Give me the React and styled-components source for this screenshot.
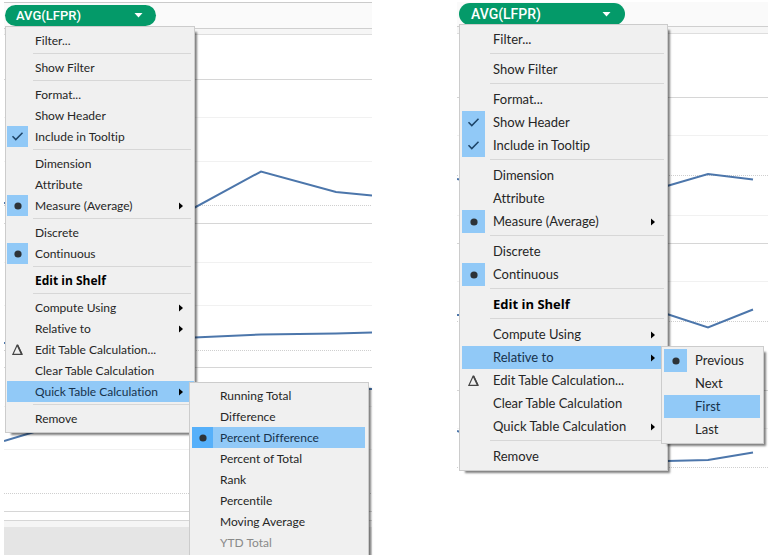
import React from "react";
import styled, { createGlobalStyle, ThemeProvider } from "styled-components";

const GlobalStyle = createGlobalStyle`
  *, *::before, *::after { box-sizing: border-box; }
  body { margin: 0; background: #fff; }
`;

const compact = {
  row: 21, rule: 6, mark: 21, font: 12, label: 7, pillWidth: 151, pillHeight: 21, pillFont: 13,
  pillTop: 2, pillLeft: 1, pillPad: 11, caret: 13, menuWidth: 190, menuTop: 0, menuPad: 1, menuEnd: 3, shelfTop: 2, shelfHeight: 27,
  stripHeight: 6, ruleStart: 26, arrowEnd: 8, subWidth: 180, subStart: 182, subTop: 1,
};

const roomy = {
  row: 23, rule: 7, mark: 23, font: 13, label: 8, pillWidth: 166, pillHeight: 22, pillFont: 14,
  pillTop: 0, pillLeft: 2, pillPad: 12, caret: 14, menuWidth: 209, menuTop: -1, menuPad: 2, menuEnd: 2, shelfTop: 2, shelfHeight: 25,
  stripHeight: 7, ruleStart: 28, arrowEnd: 9, subWidth: 103, subStart: 199, subTop: 0,
};

const Page = styled.main`
  display: grid;
  grid-template-columns: 368fr 311fr;
  column-gap: 85px;
  min-height: 100vh;
  max-height: 100vh;
  padding: 0 13px 0 4px;
  overflow: hidden;
  font-family: Lato, "Open Sans", sans-serif;
  font-variant-ligatures: none;
  color: #222;
`;

const View = styled.section`
  display: flex;
  flex-direction: column;
  min-width: 0;
`;

const Shelf = styled.header`
  flex: none;
  margin-top: ${({ theme }) => theme.shelfTop}px;
  height: ${({ theme }) => theme.shelfHeight}px;
  padding-left: ${({ theme }) => theme.pillLeft}px;
  background: #fafafa;
  border-top: 1px solid ${({ $edge }) => ($edge ? "#cbcbcb" : "#fafafa")};
  border-bottom: 1px solid #cfcfcf;
`;

const Strip = styled.div`
  flex: none;
  height: ${({ theme }) => theme.stripHeight}px;
  background: #f6f6f6;
  border-bottom: 1px solid #dedede;
`;

const PillHolder = styled.div`
  position: relative;
  z-index: 1;
  width: ${({ theme }) => theme.pillWidth}px;
  margin-top: ${({ theme }) => theme.pillTop}px;
`;

const Pill = styled.button`
  display: flex;
  align-items: center;
  justify-content: space-between;
  width: 100%;
  height: ${({ theme }) => theme.pillHeight}px;
  padding: 0 ${({ theme }) => theme.caret}px 0 ${({ theme }) => theme.pillPad}px;
  border: 0;
  border-radius: 11px;
  background: #049a69;
  color: #fff;
  font: 500 ${({ theme }) => theme.pillFont}px/20px Roboto, "Open Sans", sans-serif;
`;

const MenuPanel = styled.ul`
  position: absolute;
  top: calc(100% + ${({ theme }) => theme.menuTop}px);
  left: 0;
  width: ${({ theme }) => theme.menuWidth}px;
  margin: 0;
  padding: 3px 0 ${({ theme }) => theme.menuEnd}px ${({ theme }) => theme.menuPad}px;
  list-style: none;
  background: #f0f0f0;
  border: 1px solid #cccccc;
  box-shadow: 4px 4px 2px -2px rgba(0, 0, 0, 0.5);
`;

const SubPanel = styled(MenuPanel)`
  top: ${({ theme }) => theme.subTop}px;
  left: ${({ theme }) => theme.subStart}px;
  width: ${({ theme }) => theme.subWidth}px;
  padding: 2px 3px 2px 2px;
`;

const Entry = styled.li`
  position: relative;
`;

const Item = styled.button`
  display: flex;
  align-items: center;
  width: 100%;
  height: ${({ theme }) => theme.row}px;
  padding: 0 ${({ theme }) => theme.arrowEnd + 3}px 0 0;
  border: 0;
  background: ${({ $active }) => ($active ? "#91c9f7" : "transparent")};
  color: ${({ $active, $strong }) => ($strong ? "#000" : $active ? "#16324c" : "#262626")};
  font-family: ${({ $strong }) => ($strong ? '"Open Sans", sans-serif' : "inherit")};
  font-size: ${({ theme }) => theme.font}px;
  font-variant-ligatures: none;
  line-height: ${({ theme }) => theme.row}px;
  font-weight: ${({ $strong }) => ($strong ? 700 : 400)};
  text-align: left;
  white-space: nowrap;

  &:disabled { color: #8a8a8a; }
`;

const Mark = styled.span`
  display: flex;
  flex: none;
  align-items: center;
  justify-content: center;
  width: ${({ theme }) => theme.mark}px;
  height: 100%;
  margin-right: ${({ theme }) => theme.label}px;
  background: ${({ $on, $active }) => (!$on ? "transparent" : $active ? "#56b0fa" : "#91c9f7")};
`;

const Label = styled.span`
  flex: 1;
`;

const Rule = styled.li`
  height: ${({ theme }) => theme.rule}px;
  margin: 0 3px 0 ${({ theme }) => theme.ruleStart}px;
  padding-top: 2px;

  &::before {
    content: "";
    display: block;
    border-top: 1px solid #d7d7d7;
  }
`;

const Plot = styled.svg`
  display: block;
  flex: none;
  width: 100%;
  height: ${({ $height }) => $height}px;
`;

const Footer = styled.footer`
  flex: 1;
  background: #e5e5e5;
  border-top: 6px solid #f5f5f5;
`;

const marks = {
  check: (
    <svg width="13" height="11" viewBox="0 0 13 11" fill="none" stroke="#1d4468" strokeWidth="1.5" aria-hidden="true">
      <path d="M1.5 5.2 L4.8 8.6 L11.5 1.8" />
    </svg>
  ),
  dot: (
    <svg width="8" height="8" viewBox="0 0 8 8" aria-hidden="true">
      <circle cx="4" cy="4" r="3.6" fill="#2d3338" />
    </svg>
  ),
  delta: (
    <svg width="13" height="13" viewBox="0 0 13 13" fill="none" stroke="#444" aria-hidden="true">
      <path d="M6.2 2 L1.9 11.3 H11 L6.6 2 Z" strokeWidth="1.2" />
      <path d="M6.4 2 L10.7 11.2" strokeWidth="1.7" />
    </svg>
  ),
};

const Arrow = () => (
  <svg width="4" height="8" viewBox="0 0 4 8" aria-hidden="true">
    <path d="M0 0.5 L4 4 L0 7.5 Z" fill="#000" />
  </svg>
);

function MenuItem({ item, openName, submenu }) {
  const { name, mark, arrow, strong, disabled, active } = item;
  const lit = active || name === openName;
  const on = mark === "check" || mark === "dot";
  return (
    <Entry role="none">
      <Item
        type="button"
        role={mark === "check" ? "menuitemcheckbox" : mark === "dot" ? "menuitemradio" : "menuitem"}
        aria-checked={on ? true : undefined}
        aria-haspopup={arrow ? "menu" : undefined}
        disabled={disabled}
        $active={lit}
        $strong={strong}
      >
        <Mark $on={on} $active={lit}>{marks[mark]}</Mark>
        <Label>{name}</Label>
        {arrow && <Arrow />}
      </Item>
      {name === openName && (
        <SubPanel role="menu" aria-label={name}>
          {submenu.map((sub) => <MenuItem key={sub.name} item={sub} />)}
        </SubPanel>
      )}
    </Entry>
  );
}

const menuGroups = (headerShown) => [
  [{ name: "Filter..." }],
  [{ name: "Show Filter" }],
  [{ name: "Format..." }, { name: "Show Header", mark: headerShown ? "check" : undefined }, { name: "Include in Tooltip", mark: "check" }],
  [{ name: "Dimension" }, { name: "Attribute" }, { name: "Measure (Average)", mark: "dot", arrow: true }],
  [{ name: "Discrete" }, { name: "Continuous", mark: "dot" }],
  [{ name: "Edit in Shelf", strong: true }],
  [
    { name: "Compute Using", arrow: true },
    { name: "Relative to", arrow: true },
    { name: "Edit Table Calculation...", mark: "delta" },
    { name: "Clear Table Calculation" },
    { name: "Quick Table Calculation", arrow: true },
  ],
  [{ name: "Remove" }],
];

const quickItems = [
  { name: "Running Total" },
  { name: "Difference" },
  { name: "Percent Difference", mark: "dot", active: true },
  { name: "Percent of Total" },
  { name: "Rank" },
  { name: "Percentile" },
  { name: "Moving Average" },
  { name: "YTD Total", disabled: true },
];

const relativeItems = [
  { name: "Previous", mark: "dot" },
  { name: "Next" },
  { name: "First", active: true },
  { name: "Last" },
];

function FieldMenu({ headerShown, openName, submenu }) {
  return (
    <PillHolder>
      <Pill type="button" aria-haspopup="menu" aria-expanded="true">
        AVG(LFPR)
        <svg width="9" height="5" viewBox="0 0 9 5" aria-hidden="true"><path d="M0.5 0 H8.5 L4.5 4.5 Z" fill="#fff" /></svg>
      </Pill>
      <MenuPanel role="menu" aria-label="AVG(LFPR)">
        {menuGroups(headerShown).map((group, i) => (
          <React.Fragment key={group[0].name}>
            {i > 0 && <Rule role="separator" />}
            {group.map((item) => <MenuItem key={item.name} item={item} openName={openName} submenu={submenu} />)}
          </React.Fragment>
        ))}
      </MenuPanel>
    </PillHolder>
  );
}

function Chart({ width, height, solid, faint, dotted, lines }) {
  const rule = (y, props) => (
    <line key={y} x1="0" x2={width} y1={y + 0.5} y2={y + 0.5} vectorEffect="non-scaling-stroke" {...props} />
  );
  return (
    <Plot $height={height} viewBox={`0 0 ${width} ${height}`} preserveAspectRatio="none" role="img" aria-label="AVG(LFPR) over time">
      {faint.map((y) => rule(y, { stroke: "#f1f1f1" }))}
      {dotted.map((y) => rule(y, { stroke: "#cfcfcf", strokeDasharray: "1 1" }))}
      {solid.map((y) => rule(y, { stroke: "#d6d6d6" }))}
      {lines.map((points) => (
        <polyline key={points} points={points} fill="none" stroke="#4c76ab" strokeWidth="2" vectorEffect="non-scaling-stroke" />
      ))}
    </Plot>
  );
}

export default function App() {
  return (
    <>
      <GlobalStyle />
      <Page>
        <ThemeProvider theme={compact}>
          <View>
            <Shelf $edge>
              <FieldMenu openName="Quick Table Calculation" submenu={quickItems} />
            </Shelf>
            <Strip />
            <Chart
              width={368}
              height={486}
              solid={[44, 188, 332, 476, 485]}
              faint={[82, 126, 227, 270, 371, 414]}
              dotted={[170, 315, 458]}
              lines={[
                "0,168 190,173 257,136.500 332,157 368,160.500",
                "0,308 190,302.500 257,299.500 332,298.500 368,297.500",
                "0,406 30,397 190,350 368,354",
              ]}
            />
            <Footer />
          </View>
        </ThemeProvider>
        <ThemeProvider theme={roomy}>
          <View>
            <Shelf>
              <FieldMenu headerShown openName="Relative to" submenu={relativeItems} />
            </Shelf>
            <Strip />
            <Chart
              width={311}
              height={440}
              solid={[63, 209, 356]}
              faint={[101, 181, 247, 394]}
              dotted={[141, 287, 433]}
              lines={[
                "0,145 100,166 210,152 251,140 296,145.500",
                "0,281 210,280 251,293.500 296,275.500",
                "0,397 100,428 210,427 251,426 296,418.500",
              ]}
            />
          </View>
        </ThemeProvider>
      </Page>
    </>
  );
}
